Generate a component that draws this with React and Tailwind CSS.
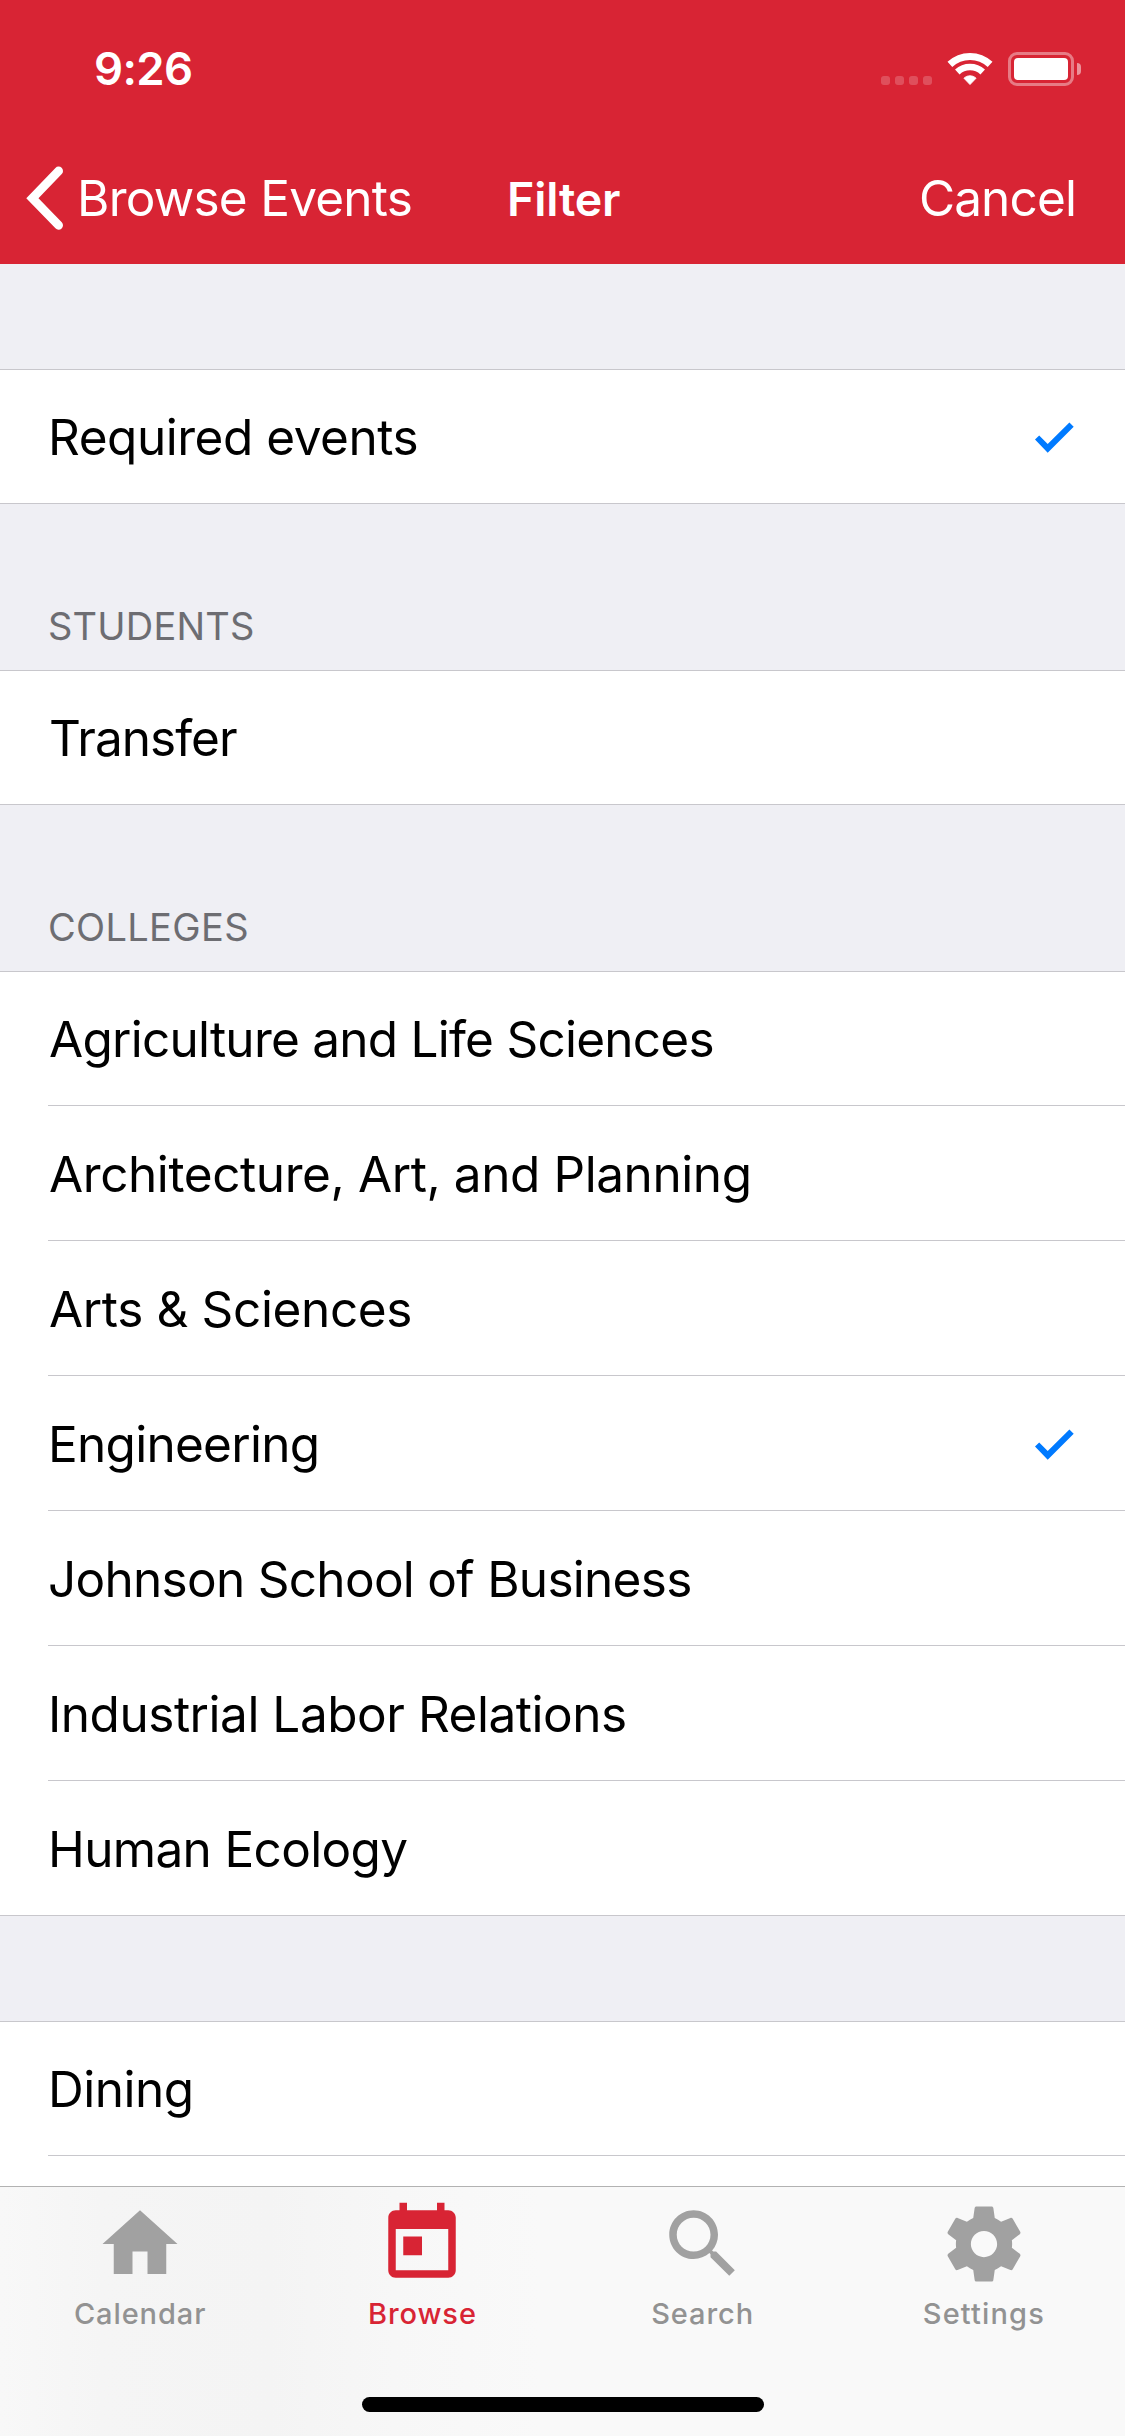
import React from 'react';

function StatusBar() {
  return (
    <div className="flex h-[132px] items-start justify-between pl-[94px] pr-[44px]">
      <span className="mt-[41px] text-[45.5px] leading-[55px] font-semibold tracking-[-0.62px]">9:26</span>
      <div className="mt-[52px] flex h-[34px] items-start">
        <div className="mt-6 flex gap-[5px]">
          {[0, 1, 2, 3].map((i) => (
            <span key={i} className="h-[9px] w-[9px] rounded-[3px] bg-white/20" />
          ))}
        </div>
        <svg className="ml-[15px] h-[34px] w-[46px]" viewBox="0 0 46 34" fill="none" stroke="#fff">
          <path d="M2.9 12.4A29.4 29.4 0 0 1 43.1 12.4" strokeWidth="7" />
          <path d="M10.3 20A18.6 18.6 0 0 1 35.7 20" strokeWidth="6.6" />
          <path d="M23 32.6L16.9 26.2C20.4 22.9 25.6 22.9 29.1 26.2Z" fill="#fff" strokeWidth="0.8" strokeLinejoin="round" />
        </svg>
        <div className="ml-[15px] h-[34px] w-[66px] rounded-[9px] border-[3px] border-white/40 p-[3px]">
          <div className="h-[22px] w-[54px] rounded-[4px] bg-white" />
        </div>
        <div className="mt-[11px] ml-[3px] h-3 w-1 rounded-r-full bg-white/50" />
      </div>
    </div>
  );
}

function NavBar() {
  return (
    <div className="grid h-[132px] grid-cols-[506px_1fr_auto] items-center pr-[49px] text-[49.5px] leading-[60px]">
      <div className="flex items-center pl-[25px]">
        <svg className="h-[66px] w-10" viewBox="0 0 40 66" fill="none" stroke="#fff" strokeWidth="8.8" strokeLinecap="round">
          <path d="M33.6 6L7.4 33.2L33.6 60.3" strokeLinejoin="miter" />
        </svg>
        <span className="ml-3 tracking-[-0.75px]">Browse Events</span>
      </div>
      <span className="pt-[2px] pl-px text-[46.5px] font-semibold tracking-[-0.14px]">Filter</span>
      <span className="tracking-[-0.87px]">Cancel</span>
    </div>
  );
}

function Row({ label, tracking, checked, first }) {
  return (
    <div className="bg-white pl-12">
      <div
        className={
          'flex items-center justify-between pr-[51px] ' +
          (first ? 'h-[133px] pt-px' : 'h-[135px] border-t border-[#c8c7cc] pt-[2px]')
        }
      >
        <span className={'text-[49.5px] leading-[60px] whitespace-nowrap ' + tracking}>{label}</span>
        {checked && (
          <svg className="mt-[2px] h-8 w-10" viewBox="0 0 40 32" fill="#007aff">
            <path d="M1 17.6L5.2 13.6L13.7 22L35.4 0.6L39.7 4.8L13.7 30.8Z" />
          </svg>
        )}
      </div>
    </div>
  );
}

function Section({ title, tracking, rows, open }) {
  return (
    <section>
      {title ? (
        <h2 className={'flex h-[166px] items-end pb-[21px] pl-12 text-[38px] leading-[46px] text-[#6d6d72] ' + tracking}>
          {title}
        </h2>
      ) : (
        <div className="h-[105px]" />
      )}
      <div className={'border-[#c8c7cc] ' + (open ? 'border-t' : 'border-y')}>
        {rows.map((row, i) => (
          <Row key={row.label} {...row} first={i === 0} />
        ))}
        {open && (
          <div className="bg-white pl-12">
            <div className="h-[31px] border-t border-[#c8c7cc]" />
          </div>
        )}
      </div>
    </section>
  );
}

const sections = [
  { rows: [{ label: 'Required events', tracking: 'tracking-[-0.47px]', checked: true }] },
  {
    title: 'STUDENTS',
    tracking: 'tracking-[0.2px]',
    rows: [{ label: 'Transfer', tracking: 'tracking-[-0.95px] pl-px' }],
  },
  {
    title: 'COLLEGES',
    tracking: 'tracking-[0.33px]',
    rows: [
      { label: 'Agriculture and Life Sciences', tracking: 'tracking-[-0.75px] pl-px' },
      { label: 'Architecture, Art, and Planning', tracking: 'tracking-[-0.41px] pl-px' },
      { label: 'Arts & Sciences', tracking: 'tracking-[-0.36px] pl-px' },
      { label: 'Engineering', tracking: 'tracking-[-0.73px]', checked: true },
      { label: 'Johnson School of Business', tracking: 'tracking-[-0.71px]' },
      { label: 'Industrial Labor Relations', tracking: 'tracking-[-0.47px]' },
      { label: 'Human Ecology', tracking: 'tracking-[-0.66px]' },
    ],
  },
  { open: true, rows: [{ label: 'Dining', tracking: 'tracking-[-0.5px]' }] },
];

const tabs = [
  { label: 'Calendar', nudge: 'pr-px', path: 'M10 20v-6h4v6h5v-8h3L12 3 2 12h3v8z' },
  {
    label: 'Browse',
    active: true,
    nudge: 'pl-px',
    path: 'M19 3h-1V1h-2v2H8V1H6v2H5c-1.11 0-1.99.9-1.99 2L3 19c0 1.1.89 2 2 2h14c1.1 0 2-.9 2-2V5c0-1.1-.9-2-2-2zm0 16H5V8h14v11zM7 10h5v5H7z',
  },
  {
    label: 'Search',
    nudge: 'pr-px',
    path: 'M15.5 14h-.79l-.28-.27C15.41 12.59 16 11.11 16 9.5 16 5.91 13.09 3 9.5 3S3 5.91 3 9.5 5.91 16 9.5 16c1.61 0 3.09-.59 4.23-1.57l.27.28v.79l5 4.99L20.49 19l-4.99-5zm-6 0C7.01 14 5 11.99 5 9.5S7.01 5 9.5 5 14 7.01 14 9.5 11.99 14 9.5 14z',
  },
  {
    label: 'Settings',
    nudge: 'pr-px',
    path: 'M19.43 12.98c.04-.32.07-.64.07-.98s-.03-.66-.07-.98l2.11-1.65c.19-.15.24-.42.12-.64l-2-3.46c-.12-.22-.39-.3-.61-.22l-2.49 1c-.52-.4-1.08-.73-1.69-.98l-.38-2.65C14.46 2.18 14.25 2 14 2h-4c-.25 0-.46.18-.49.42l-.38 2.65c-.61.25-1.17.59-1.69.98l-2.49-1c-.23-.09-.49 0-.61.22l-2 3.46c-.13.22-.07.49.12.64l2.11 1.65c-.04.32-.07.65-.07.98s.03.66.07.98l-2.11 1.65c-.19.15-.24.42-.12.64l2 3.46c.12.22.39.3.61.22l2.49-1c.52.4 1.08.73 1.69.98l.38 2.65c.03.24.24.42.49.42h4c.25 0 .46-.18.49-.42l.38-2.65c.61-.25 1.17-.59 1.69-.98l2.49 1c.23.09.49 0 .61-.22l2-3.46c.12-.22.07-.49-.12-.64l-2.11-1.65zM12 15.5c-1.93 0-3.5-1.57-3.5-3.5s1.57-3.5 3.5-3.5 3.5 1.57 3.5 3.5-1.57 3.5-3.5 3.5z',
  },
];

function TabBar() {
  return (
    <nav className="flex h-[250px] flex-col items-center border-t border-[#b2b2b2] bg-[linear-gradient(90deg,#f8f8f8_0%,#f5f5f5_9%,#f4f4f4_24%,#f7f7f7_35%,#f9f9f9_48%)]">
      <div className="grid w-full grid-cols-4 pt-3">
        {tabs.map((t) => (
          <div
            key={t.label}
            className={'flex flex-col items-center ' + (t.active ? 'text-[#d82434] ' : 'text-[#929292] ') + t.nudge}
          >
            <svg
              className={'h-[90px] w-[90px] ' + (t.active ? 'fill-[#d82434]' : 'fill-[#a1a1a1]')}
              viewBox="0 0 24 24"
            >
              <path d={t.path} />
            </svg>
            <span
              className={
                'mt-[7px] text-[29px] leading-[35px] font-medium ' +
                (t.label === 'Settings' ? 'tracking-[1.15px]' : 'tracking-[0.91px]')
              }
            >
              {t.label}
            </span>
          </div>
        ))}
      </div>
      <div className="mt-[66px] h-[15px] w-[402px] rounded-full bg-black" />
    </nav>
  );
}

export default function App() {
  return (
    <div className="h-[2436px] w-[1125px] overflow-hidden bg-[#efeff4] font-['Inter',sans-serif] text-black">
      <header className="bg-[#d82434] text-white">
        <StatusBar />
        <NavBar />
      </header>
      <main>
        {sections.map((s, i) => (
          <Section key={i} {...s} />
        ))}
      </main>
      <TabBar />
    </div>
  );
}
